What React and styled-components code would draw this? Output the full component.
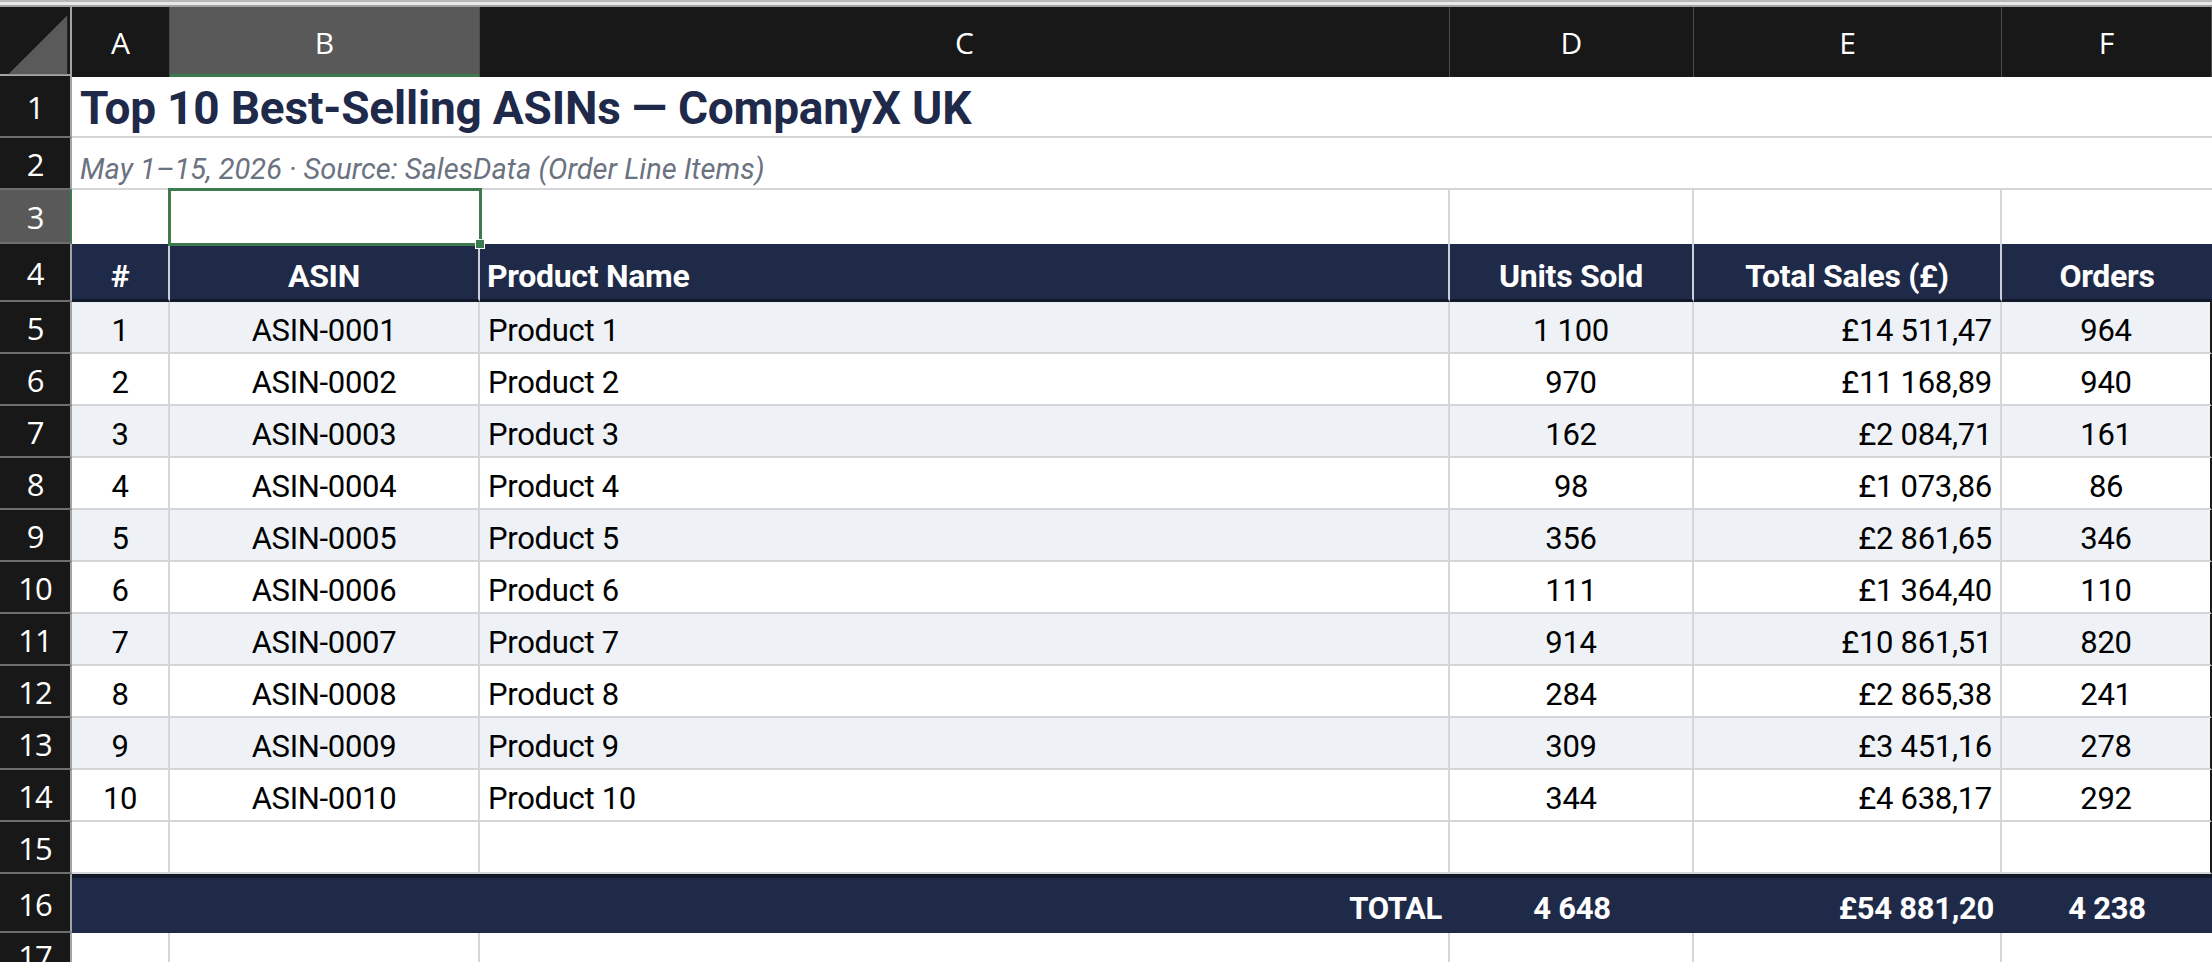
import styled, { createGlobalStyle } from 'styled-components';

const COLS = '72px 98px 310px 970px 244px 308px 210px';
const NAVY = '#1f2a48';
const GRID = '#d4d6da';

const rows = [
  { asin: 'ASIN-0001', name: 'Product 1', units: '1 100', sales: '£14 511,47', orders: '964' },
  { asin: 'ASIN-0002', name: 'Product 2', units: '970', sales: '£11 168,89', orders: '940' },
  { asin: 'ASIN-0003', name: 'Product 3', units: '162', sales: '£2 084,71', orders: '161' },
  { asin: 'ASIN-0004', name: 'Product 4', units: '98', sales: '£1 073,86', orders: '86' },
  { asin: 'ASIN-0005', name: 'Product 5', units: '356', sales: '£2 861,65', orders: '346' },
  { asin: 'ASIN-0006', name: 'Product 6', units: '111', sales: '£1 364,40', orders: '110' },
  { asin: 'ASIN-0007', name: 'Product 7', units: '914', sales: '£10 861,51', orders: '820' },
  { asin: 'ASIN-0008', name: 'Product 8', units: '284', sales: '£2 865,38', orders: '241' },
  { asin: 'ASIN-0009', name: 'Product 9', units: '309', sales: '£3 451,16', orders: '278' },
  { asin: 'ASIN-0010', name: 'Product 10', units: '344', sales: '£4 638,17', orders: '292' },
];

const GlobalStyle = createGlobalStyle`
  html, body {
    margin: 0;
    padding: 0;
    background: #ffffff;
    overflow: hidden;
  }
  body {
    font-family: Roboto, "Liberation Sans", sans-serif;
  }
`;

const App = () => {
  return (
    <>
      <GlobalStyle />
      <Window>
        <TopFrame />
        <HeaderRow>
          <Corner>
            <CornerTriangle viewBox="0 0 50 50" preserveAspectRatio="none">
              <polygon points="48,6 48,48 6,48" fill="#5a5a5a" />
            </CornerTriangle>
          </Corner>
          {['A', 'B', 'C', 'D', 'E', 'F'].map(letter => (
            <ColLetter key={letter} selected={letter === 'B'}>
              {letter}
            </ColLetter>
          ))}
        </HeaderRow>

        <Row height={62}>
          <RowNum>1</RowNum>
          <MergedCell>
            <Title>Top 10 Best-Selling ASINs — CompanyX UK</Title>
          </MergedCell>
        </Row>

        <Row height={52}>
          <RowNum>2</RowNum>
          <MergedCell>
            <Subtitle>May 1–15, 2026 · Source: SalesData (Order Line Items)</Subtitle>
          </MergedCell>
        </Row>

        <Row height={54}>
          <RowNum selected>3</RowNum>
          <Cell />
          <Cell>
            <Selection>
              <Handle />
            </Selection>
          </Cell>
          <Cell line />
          <Cell line />
          <Cell line />
          <Cell />
        </Row>

        <Row height={58}>
          <RowNum>4</RowNum>
          <HeadCell align="center">#</HeadCell>
          <HeadCell align="center">ASIN</HeadCell>
          <HeadCell align="left">Product Name</HeadCell>
          <HeadCell align="center">Units Sold</HeadCell>
          <HeadCell align="center">Total Sales (£)</HeadCell>
          <HeadCell align="center" last>
            Orders
          </HeadCell>
        </Row>

        {rows.map((r, i) => (
          <Row height={52} key={r.asin}>
            <RowNum>{i + 5}</RowNum>
            <DataCell stripe={i % 2 === 0} align="center">
              {i + 1}
            </DataCell>
            <DataCell stripe={i % 2 === 0} align="center">
              {r.asin}
            </DataCell>
            <DataCell stripe={i % 2 === 0} align="left">
              {r.name}
            </DataCell>
            <DataCell stripe={i % 2 === 0} align="center">
              {r.units}
            </DataCell>
            <DataCell stripe={i % 2 === 0} align="right">
              {r.sales}
            </DataCell>
            <DataCell stripe={i % 2 === 0} align="center" edge>
              {r.orders}
            </DataCell>
          </Row>
        ))}

        <Row height={52}>
          <RowNum>15</RowNum>
          <DataCell align="center" />
          <DataCell align="center" />
          <DataCell align="left" />
          <DataCell align="center" />
          <DataCell align="right" />
          <DataCell align="center" edge />
        </Row>

        <Row height={59}>
          <RowNum>16</RowNum>
          <TotalCell align="center" />
          <TotalCell align="center" />
          <TotalCell align="right">TOTAL</TotalCell>
          <TotalCell align="center">4 648</TotalCell>
          <TotalCell align="right">£54 881,20</TotalCell>
          <TotalCell align="center">4 238</TotalCell>
        </Row>

        <Row height={40}>
          <RowNum>17</RowNum>
          <Cell line />
          <Cell line />
          <Cell line />
          <Cell line />
          <Cell line />
          <Cell />
        </Row>
      </Window>
    </>
  );
};

const Window = styled.div`
  width: 2212px;
  height: 962px;
  overflow: hidden;
  background: #ffffff;
`;

const TopFrame = styled.div`
  height: 3px;
  background: #e9e9e9;
  border-top: 2px solid #b8b8b8;
  border-bottom: 2px solid #a3a3a3;
`;

const HeaderRow = styled.div`
  display: grid;
  grid-template-columns: ${COLS};
  height: 67px;
  background: #181818;
  border-bottom: 2px solid #a4a4a4;
`;

const Corner = styled.div`
  position: relative;
  border-right: 2px solid #a4a4a4;
`;

const CornerTriangle = styled.svg`
  width: 100%;
  height: 100%;
  display: block;
`;

const ColLetter = styled.div`
  display: flex;
  align-items: center;
  justify-content: center;
  color: #ffffff;
  font-family: "Open Sans", "Noto Sans", sans-serif;
  font-size: 30px;
  background: ${props => (props.selected ? '#595959' : '#181818')};
  border-right: 1px solid #4b4b4b;
  box-shadow: ${props => (props.selected ? 'inset 0 -3px 0 #3d7a4e' : 'none')};
`;

const Row = styled.div`
  display: grid;
  grid-template-columns: ${COLS};
  height: ${props => props.height}px;
`;

const RowNum = styled.div`
  display: flex;
  align-items: center;
  justify-content: center;
  padding-top: 2px;
  color: #ffffff;
  font-family: "Open Sans", "Noto Sans", sans-serif;
  font-size: 31px;
  letter-spacing: -1px;
  background: ${props => (props.selected ? '#595959' : '#181818')};
  border-right: 2px solid ${props => (props.selected ? '#3d7a4e' : '#a4a4a4')};
  border-bottom: 2px solid #6e6e6e;
`;

const MergedCell = styled.div`
  grid-column: 2 / span 6;
  display: flex;
  align-items: center;
  padding-left: 8px;
  border-bottom: 2px solid ${GRID};
`;

const Title = styled.div`
  font-family: Roboto, "Liberation Sans", sans-serif;
  font-weight: 700;
  font-size: 46px;
  color: #1f2a4a;
  letter-spacing: -0.2px;
  padding-top: 4px;
`;

const Subtitle = styled.div`
  font-family: Roboto, "Liberation Sans", sans-serif;
  font-style: italic;
  font-size: 29px;
  color: #6b7280;
  padding-top: 12px;
`;

const Cell = styled.div`
  position: relative;
  border-right: ${props => (props.line ? `2px solid ${GRID}` : 'none')};
`;

const Selection = styled.div`
  position: absolute;
  left: -2px;
  top: -2px;
  right: -2px;
  bottom: -2px;
  border: 3px solid #3d7a4e;
  z-index: 2;
`;

const Handle = styled.div`
  position: absolute;
  right: -6px;
  bottom: -6px;
  width: 8px;
  height: 8px;
  background: #3d7a4e;
  border: 1px solid #ffffff;
`;

const HeadCell = styled.div`
  display: flex;
  align-items: center;
  justify-content: ${props =>
    props.align === 'left' ? 'flex-start' : props.align === 'right' ? 'flex-end' : 'center'};
  padding: 8px 7px 0;
  background: ${NAVY};
  color: #ffffff;
  font-weight: 700;
  font-size: 32px;
  letter-spacing: -0.3px;
  border-right: ${props => (props.last ? 'none' : '2px solid #c9ced8')};
  border-bottom: 3px solid #111827;
`;

const DataCell = styled.div`
  display: flex;
  align-items: center;
  justify-content: ${props =>
    props.align === 'left' ? 'flex-start' : props.align === 'right' ? 'flex-end' : 'center'};
  padding: 7px 8px 0;
  background: ${props => (props.stripe ? '#eef2f7' : '#ffffff')};
  color: #000000;
  font-size: 31px;
  letter-spacing: -0.3px;
  border-right: 2px solid ${props => (props.edge ? '#1a1a1a' : GRID)};
  border-bottom: 2px solid ${GRID};
`;

const TotalCell = styled.div`
  display: flex;
  align-items: center;
  justify-content: ${props =>
    props.align === 'left' ? 'flex-start' : props.align === 'right' ? 'flex-end' : 'center'};
  padding: 6px 8px 0;
  background: ${NAVY};
  color: #ffffff;
  font-weight: 700;
  font-size: 31px;
  letter-spacing: -0.3px;
  border-top: 4px solid #111827;
`;

export default App;
